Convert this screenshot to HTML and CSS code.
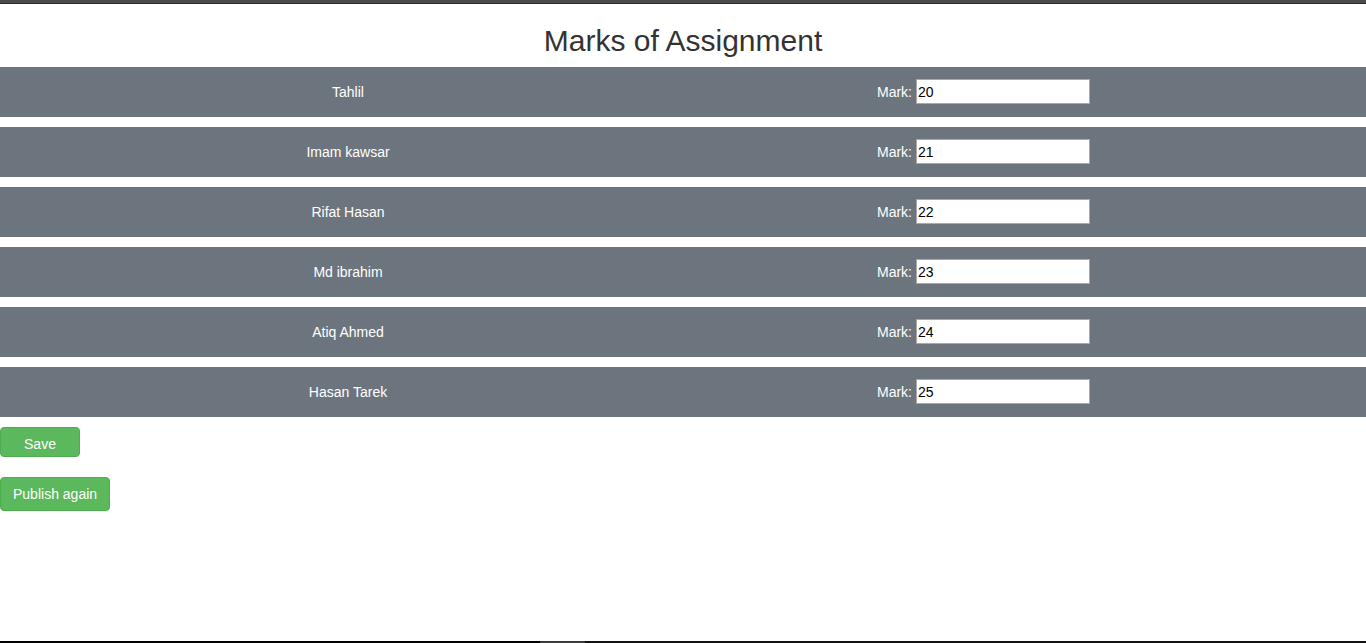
FILE: index.html
```html
<!DOCTYPE html>
<html lang="en">
<head>
<meta charset="utf-8">
<title>Marks of Assignment</title>
<link rel="stylesheet" href="styles.css">
</head>
<body>
<div class="page">
  <div class="topbar"></div>
  <main class="content">
    <h2 class="title">Marks of Assignment</h2>
    <form class="marks">
      <div class="row"><div class="name">Tahlil</div><div class="mark"><label>Mark: <input type="text" value="20"></label></div></div>
      <div class="row"><div class="name">Imam kawsar</div><div class="mark"><label>Mark: <input type="text" value="21"></label></div></div>
      <div class="row"><div class="name">Rifat Hasan</div><div class="mark"><label>Mark: <input type="text" value="22"></label></div></div>
      <div class="row"><div class="name">Md ibrahim</div><div class="mark"><label>Mark: <input type="text" value="23"></label></div></div>
      <div class="row"><div class="name">Atiq Ahmed</div><div class="mark"><label>Mark: <input type="text" value="24"></label></div></div>
      <div class="row"><div class="name">Hasan Tarek</div><div class="mark"><label>Mark: <input type="text" value="25"></label></div></div>
      <div class="actions">
        <button type="button" class="btn btn-save">Save</button>
        <button type="button" class="btn btn-publish">Publish again</button>
      </div>
    </form>
  </main>
  <div class="bottombar"></div>
</div>
</body>
</html>
```
FILE: styles.css
```css
* { box-sizing: border-box; }
html, body { margin: 0; padding: 0; }
body {
  font-family: "Liberation Sans", Arial, Helvetica, sans-serif;
  font-size: 14px;
  line-height: 20px;
  color: #333;
  background: #fff;
}
.page {
  display: flex;
  flex-direction: column;
  min-height: 100vh;
}
.topbar {
  height: 4px;
  background: #4b4b4b;
  border-bottom: 1px solid #2a2a2a;
}
.content { flex: 1; }
.bottombar {
  height: 2px;
  background: linear-gradient(to right, #000 0, #000 540px, #3a3a3a 540px, #3a3a3a 585px, #111 585px, #111 100%);
}
.title {
  margin: 20px 0 10px;
  font-size: 30px;
  font-weight: 400;
  line-height: 33px;
  text-align: center;
  color: #333;
}
.marks { margin: 0; }
.row {
  display: flex;
  align-items: center;
  height: 50px;
  margin-bottom: 10px;
  background: #6c757d;
  color: #fff;
}
.name {
  width: 696px;
  text-align: center;
}
.mark {
  flex: 1;
  display: flex;
  justify-content: center;
  padding-right: 95px;
}
.mark label {
  display: inline-flex;
  align-items: center;
  gap: 4px;
  margin-top: -1px;
}
.mark input {
  width: 174px;
  height: 25px;
  padding: 1px 1px;
  border: 1px solid #a9a9a9;
  font-family: "Liberation Sans", Arial, sans-serif;
  font-size: 14px;
  color: #000;
  background: #fff;
}
.actions {
  display: flex;
  flex-direction: column;
  align-items: flex-start;
  gap: 20px;
}
.btn {
  font-family: "Liberation Sans", Arial, sans-serif;
  font-size: 14px;
  line-height: 20px;
  color: #fff;
  background: #5cb85c;
  border: 1px solid #4cae4c;
  border-radius: 4px;
  cursor: pointer;
}
.btn-save {
  width: 80px;
  height: 30px;
  padding: 6px 10px 2px;
}
.btn-publish {
  height: 34px;
  padding: 6px 12px;
}
```
